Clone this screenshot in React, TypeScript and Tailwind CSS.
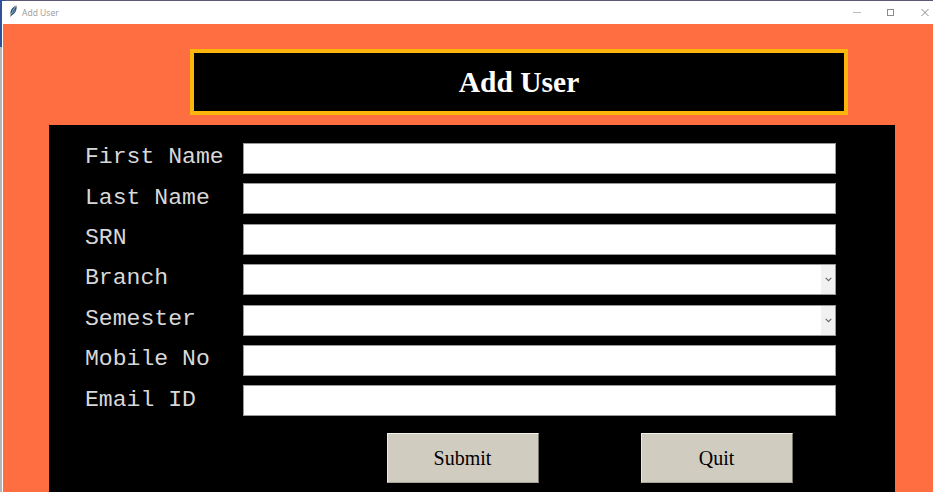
type Field = { label: string; select?: boolean };

const fields: Field[] = [
  { label: "First Name" },
  { label: "Last Name" },
  { label: "SRN" },
  { label: "Branch", select: true },
  { label: "Semester", select: true },
  { label: "Mobile No" },
  { label: "Email ID" },
];

function TitleBar() {
  return (
    <header className="flex h-[23px] shrink-0 items-center bg-white pl-[7px]">
      <svg className="mr-[4px] mt-[-2px] h-[13px] w-[9px]" viewBox="0 0 9 13">
        <path d="M1.4 12 1.7 9C0.8 6.5 2.8 2.4 7.3 0.5 8.3 3.6 6.9 8.2 3 10Z" fill="#2c4257" />
        <path d="M7 1C4.6 3.8 3.3 6.3 2.4 9.2" stroke="#91b4d2" strokeWidth="1.1" fill="none" />
        <path d="M6.5 4.5 4.2 8.4" stroke="#487aa8" strokeWidth="1.4" />
      </svg>
      <span className="mt-[-1px] origin-left scale-x-[0.95] font-['Open_Sans',sans-serif] text-[9px] leading-none text-[#999]">
        Add User
      </span>
      <svg className="mt-[-2px] ml-auto h-[10px] w-[82px]" viewBox="0 0 82 10" fill="none">
        <path d="M2 5.5h8" stroke="#bbb" />
        <rect x="36.5" y="2.5" width="6" height="6" stroke="#8c8c8c" />
        <path d="m70.5 2 7 7m0-7-7 7" stroke="#8c8c8c" />
      </svg>
    </header>
  );
}

function Row({ label, select }: Field) {
  return (
    <label className="flex h-[31px] items-center">
      <span className="w-[158px] shrink-0 origin-left scale-x-[1.075] whitespace-pre pb-[1px] font-['Liberation_Mono',monospace] text-[21.5px] leading-none text-[#d8d8d8]">
        {label}
      </span>
      <span className="flex h-[31px] w-[593px] justify-end border border-[#999] bg-white">
        {select && (
          <span className="flex w-[14px] items-center justify-center bg-[#f1f1f1]">
            <svg className="h-[5px] w-[7px]" viewBox="0 0 7 5" fill="none">
              <path d="M0.7 0.8 3.5 3.6 6.3 0.8" stroke="#666" strokeWidth="1.1" />
            </svg>
          </span>
        )}
      </span>
    </label>
  );
}

function FormButton({ children }: { children: string }) {
  return (
    <button className="h-[50px] w-[152px] border border-b-[#a8a498] border-l-[#eeeae0] border-r-[#77746b] border-t-[#f5f2e8] bg-[#d1ccc0] pt-[1px] font-['Liberation_Serif',serif] text-[20px] leading-none text-black">
      {children}
    </button>
  );
}

export default function App() {
  return (
    <div className="flex h-[492px] w-[933px] overflow-hidden bg-[#30509a]">
      <div className="flex w-[2px] shrink-0 flex-col">
        <div className="h-[47px]" />
        <div className="flex-1 bg-[#b5b5b5]" />
      </div>
      <div className="flex min-w-0 flex-1 flex-col rounded-tl-md border-t border-t-[#5d5873] bg-white">
        <TitleBar />
        <main className="ml-[1px] flex min-h-0 flex-1 flex-col bg-[#ff6e40]">
          <h1 className="ml-[187px] mt-[24.5px] flex h-[66.5px] w-[658px] shrink-0 items-center justify-center border-4 border-[#fbb50d] bg-black pt-[2px] font-['Liberation_Serif',serif] text-[29.5px] font-bold leading-none text-white">
            Add User
          </h1>
          <section className="ml-[45.5px] mt-[10px] flex w-[846.5px] flex-1 flex-col bg-black pl-[36.5px] pt-[18px]">
            <div className="flex flex-col gap-[9.4px]">
              {fields.map((f) => (
                <Row key={f.label} {...f} />
              ))}
            </div>
            <div className="ml-[301.5px] mt-[16.5px] flex gap-[102px]">
              <FormButton>Submit</FormButton>
              <FormButton>Quit</FormButton>
            </div>
          </section>
        </main>
      </div>
    </div>
  );
}
